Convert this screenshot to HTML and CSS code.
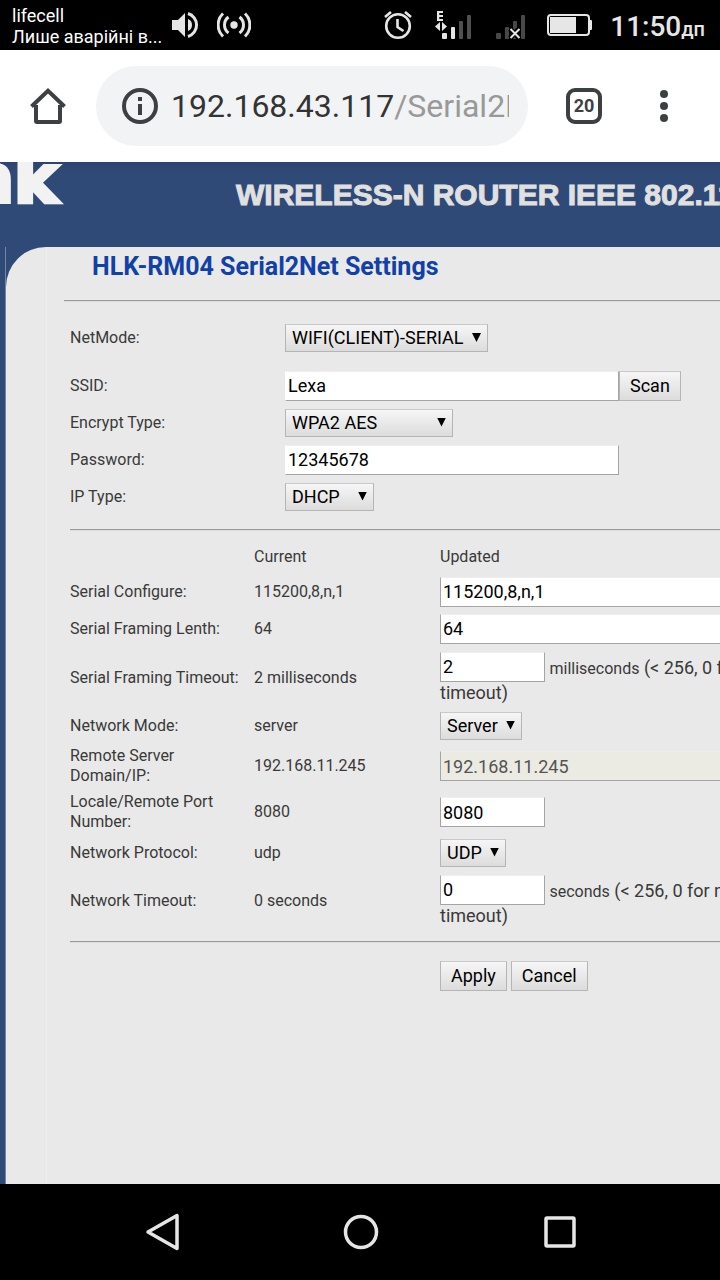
FILE: index.html
```html
<!DOCTYPE html>
<html lang="en">
<head>
<meta charset="utf-8">
<meta name="viewport" content="width=device-width, initial-scale=1">
<title>HLK-RM04 Serial2Net Settings</title>
<link rel="stylesheet" href="styles.css">
</head>
<body>
<header class="status">
  <div class="carrier" lang="uk"><span>lifecell</span><span>Лише аварійні в...</span></div>
  <svg class="volume" width="28" height="28" viewBox="0 0 28 28" fill="#e6e6e6"><path d="M1 9h6l7-7v24l-7-7H1z"/><path d="M17 8a6.500 6.500 0 0 1 0 12z"/><path d="M17 2.500a12 12 0 0 1 0 23" fill="none" stroke="#e6e6e6" stroke-width="3"/></svg>
  <svg width="34" height="28" viewBox="0 0 34 28" fill="none" stroke="#e6e6e6" stroke-width="3"><circle cx="17" cy="14" r="3.700" fill="#e6e6e6" stroke="none"/><path d="M11.500 6a10 10 0 0 0 0 16M22.500 6a10 10 0 0 1 0 16M6 2.500a16 16 0 0 0 0 23M28 2.500a16 16 0 0 1 0 23"/></svg>
  <div class="tray">
    <svg width="34" height="32" viewBox="0 0 34 32" fill="none" stroke="#e6e6e6" stroke-width="2.600"><circle cx="15" cy="17" r="11.800"/><path d="M14.500 10v8l6 4M2 8l6-5M28 8l-6-5"/></svg>
    <svg width="42" height="32" viewBox="0 0 42 32"><path d="M2 2h6v2H4.300v2H8v2H4.300v2H8v2H2z" fill="#e6e6e6"/><path d="M5 13v9L0 17.500zM7 13v9l5-4.500z" fill="#e6e6e6"/><rect x="7" y="24" width="5" height="6" rx="1" fill="#e6e6e6"/><rect x="16" y="18" width="4" height="12" rx="1" fill="#e6e6e6"/><rect x="24" y="12" width="4" height="18" rx="1" fill="#505050"/><rect x="32" y="6" width="4" height="24" rx="1" fill="#505050"/></svg>
    <svg width="32" height="32" viewBox="0 0 32 32"><g fill="#484848"><rect x="1" y="24" width="5" height="6" rx="1"/><rect x="10" y="18" width="4" height="12" rx="1"/><rect x="18" y="12" width="4" height="18" rx="1"/><rect x="26" y="6" width="4" height="24" rx="1"/></g><path d="M15 20l9 9M24 20l-9 9" stroke="#000" stroke-width="5"/><path d="M15.500 20l9 9M24.500 20l-9 9" stroke="#e6e6e6" stroke-width="2"/></svg>
    <svg width="47" height="24" viewBox="0 0 47 24"><rect x="3" y="2" width="41" height="20" rx="3" fill="none" stroke="#e6e6e6" stroke-width="2"/><rect x="5" y="4" width="26" height="16" fill="#e6e6e6"/><path d="M44 7h2q1 0 1 1v8q0 1-1 1h-2z" fill="#e6e6e6"/></svg>
    <div class="clock" lang="uk">11:50<small>дп</small></div>
  </div>
</header>

<div class="toolbar">
  <button class="icon" aria-label="Home"><svg width="36" height="36" viewBox="0 0 36 36" fill="none" stroke="#3c4043" stroke-width="4"><path d="M6 17v16q0 1 1 1h22q1 0 1-1V17"/><path d="M1.500 18.500L18 2.800l16.500 15.700"/></svg></button>
  <div class="omnibox">
    <svg width="36" height="36" viewBox="0 0 36 36"><circle cx="18" cy="18" r="16" fill="none" stroke="#3c4043" stroke-width="4"/><path d="M16 9h4v4h-4zM16 16h4v11h-4z" fill="#3c4043"/></svg>
    <div class="url">192.168.43.117<span>/Serial2Net</span></div>
  </div>
  <button class="icon tabs" aria-label="Tabs">20</button>
  <button class="icon menu" aria-label="Menu"><svg width="8" height="32" viewBox="0 0 8 32" fill="#3c4043"><circle cx="4" cy="4" r="4"/><circle cx="4" cy="16" r="4"/><circle cx="4" cy="28" r="4"/></svg></button>
</div>

<main class="page">
  <div class="banner">
    <div class="logo">Hi-Link</div>
    <div class="slogan">WIRELESS-N ROUTER IEEE 802.11N</div>
  </div>
  <div class="sheet-frame">
    <form class="sheet">
      <h1>HLK-RM04 Serial2Net Settings</h1>
      <hr>
      <div class="settings">
        <div class="row row-mode"><label for="netmode">NetMode:</label><span class="pick"><select id="netmode" class="w-mode"><option>WIFI(CLIENT)-SERIAL</option></select></span></div>
        <div class="row"><label for="ssid">SSID:</label><input id="ssid" class="wide" type="text" value="Lexa"><button type="button" class="btn">Scan</button></div>
        <div class="row"><label for="enc">Encrypt Type:</label><span class="pick"><select id="enc" class="w-enc"><option>WPA2 AES</option></select></span></div>
        <div class="row"><label for="pass">Password:</label><input id="pass" class="wide" type="text" value="12345678"></div>
        <div class="row"><label for="ip">IP Type:</label><span class="pick"><select id="ip" class="w-ip"><option>DHCP</option></select></span></div>
        <hr>
        <table class="serial">
          <colgroup><col class="c-name"><col class="c-current"><col></colgroup>
          <thead><tr><td></td><th>Current</th><th>Updated</th></tr></thead>
          <tbody>
            <tr class="r-input"><th><label for="conf">Serial Configure:</label></th><td>115200,8,n,1</td><td><input id="conf" class="wide" type="text" value="115200,8,n,1"></td></tr>
            <tr class="r-input"><th><label for="len">Serial Framing Lenth:</label></th><td>64</td><td><input id="len" class="wide" type="text" value="64"></td></tr>
            <tr class="r-note"><th><label for="ftime">Serial Framing Timeout:</label></th><td>2 milliseconds</td><td class="note"><input id="ftime" class="short" type="text" value="2"> <small>milliseconds</small> (&lt; 256, 0 for no<br>timeout)</td></tr>
            <tr class="r-select"><th><label for="mode">Network Mode:</label></th><td>server</td><td><span class="pick"><select id="mode" class="w-server"><option>Server</option></select></span></td></tr>
            <tr class="r-double"><th><label for="remote">Remote Server<br>Domain/IP:</label></th><td>192.168.11.245</td><td><input id="remote" class="wide" type="text" value="192.168.11.245" disabled></td></tr>
            <tr class="r-double"><th><label for="port">Locale/Remote Port Number:</label></th><td>8080</td><td><input id="port" class="short" type="text" value="8080"></td></tr>
            <tr class="r-select"><th><label for="proto">Network Protocol:</label></th><td>udp</td><td><span class="pick"><select id="proto" class="w-udp"><option>UDP</option></select></span></td></tr>
            <tr class="r-note"><th><label for="ntime">Network Timeout:</label></th><td>0 seconds</td><td class="note"><input id="ntime" class="short" type="text" value="0"> <small>seconds</small> (&lt; 256, 0 for no<br>timeout)</td></tr>
          </tbody>
        </table>
        <hr>
        <div class="actions"><button type="button" class="btn">Apply</button><button type="button" class="btn">Cancel</button></div>
      </div>
    </form>
  </div>
</main>

<nav class="navbar">
  <button aria-label="Back"><svg width="40" height="40" viewBox="0 0 40 40"><path d="M37 3.500v33L8 20z" fill="none" stroke="#e6e6e6" stroke-width="3.500" stroke-linejoin="round"/></svg></button>
  <button aria-label="Home"><svg width="40" height="40" viewBox="0 0 40 40"><circle cx="21" cy="20" r="15.500" fill="none" stroke="#e6e6e6" stroke-width="3.500"/></svg></button>
  <button aria-label="Recent apps"><svg width="40" height="40" viewBox="0 0 40 40"><rect x="6" y="6" width="28" height="28" rx="1" fill="none" stroke="#e6e6e6" stroke-width="3.500"/></svg></button>
</nav>
</body>
</html>
```
FILE: styles.css
```css
* { box-sizing: border-box; }
body {
  margin: 0;
  min-height: 100vh;
  display: flex;
  flex-direction: column;
  overflow-x: hidden;
  font-family: Roboto, "Noto Sans", sans-serif;
  background: #000;
}
svg { display: block; flex: none; }
button, input, select { font: inherit; margin: 0; }

/* Status bar */
.status {
  height: 50px;
  padding: 0 15px 0 12px;
  display: flex;
  align-items: center;
  gap: 18px;
  color: #e6e6e6;
  background: #000;
}
.carrier {
  display: flex;
  flex-direction: column;
  font-size: 18px;
  line-height: 21px;
  white-space: nowrap;
  color: #fff;
  padding-top: 2px;
}
.volume { margin-left: -9px; }
.tray { margin-left: auto; display: flex; align-items: center; gap: 18px; }
.clock { font-size: 28px; font-weight: 500; white-space: nowrap; padding-top: 2px; }
.clock small { font-size: 20px; }

/* Browser toolbar */
.toolbar {
  height: 112px;
  padding: 0 52px 0 30px;
  display: flex;
  align-items: center;
  background: #fff;
}
.icon { padding: 0; border: 0; background: none; }
.omnibox {
  flex: 1;
  min-width: 0;
  height: 80px;
  margin: 0 38px 0 30px;
  padding: 0 19px 0 26px;
  display: flex;
  align-items: center;
  gap: 13px;
  border-radius: 40px;
  background: #f1f3f4;
}
.url {
  flex: 1;
  min-width: 0;
  overflow: hidden;
  white-space: nowrap;
  font-size: 32px;
  line-height: 42px;
  color: #333;
}
.url span { color: #999; }
.icon.tabs {
  width: 36px;
  height: 36px;
  border: 4px solid #3c4043;
  border-radius: 9px;
  font-size: 18px;
  line-height: 28px;
  font-weight: 700;
  color: #3c4043;
}
.menu { margin-left: 58px; }

/* Router page */
.page {
  flex: 1;
  display: flex;
  flex-direction: column;
  overflow: hidden;
  background: #304a78;
}
.banner {
  height: 85px;
  display: flex;
  align-items: flex-start;
  overflow: hidden;
  font-weight: 700;
  white-space: nowrap;
  background: linear-gradient(#2d446e, #304a78 12px);
}
.logo {
  width: 58px;
  margin-top: -16px;
  display: flex;
  justify-content: flex-end;
  flex: none;
  font-family: "DejaVu Sans", sans-serif;
  font-size: 66px;
  line-height: 68px;
  color: #f2f2f2;
  -webkit-text-stroke: 4px #f2f2f2;
}
.slogan {
  margin: 16px 0 0 178px;
  font-family: "Liberation Sans", Arial, sans-serif;
  font-size: 30px;
  line-height: 34px;
  color: #e0e0e0;
  -webkit-text-stroke: 1px #e0e0e0;
}
.sheet-frame {
  flex: 1;
  display: flex;
  margin-left: 5px;
  border-left: 1px solid #7586a6;
}
.sheet {
  flex: 1;
  min-width: 0;
  padding-left: 58px;
  border-top-left-radius: 40px;
  background: linear-gradient(90deg, #e9e9e9 40px, #eee 40px, #eee 41px, #e9e9e9 41px);
  color: #393939;
  font-size: 16px;
  line-height: 20px;
}
h1 {
  margin: 0 0 13px 28px;
  font-size: 25px;
  line-height: 40px;
  font-weight: 700;
  color: #1141a8;
}
hr {
  margin: 0;
  height: 2px;
  border: 0;
  border-top: 1px solid #999;
  border-bottom: 1px solid #ddd;
}
.settings { padding: 7px 0 0 6px; }
.row { height: 37px; display: flex; align-items: center; }
.row-mode { height: 58px; }
.row > label { width: 215px; flex: none; }
.settings > .row + hr { margin-top: 14px; }

input {
  height: 30px;
  padding: 0 2px;
  border: 1px solid #a4a4a4;
  border-top-color: #eee;
  border-radius: 0;
  background: #fff;
  color: #000;
  font-size: 18px;
}
input:disabled { background: #ebebe4; color: #545454; }
.row input { border-left-color: #fff; }
.wide { width: 334px; }
.short { width: 105px; }

.pick { position: relative; display: inline-block; vertical-align: middle; }
.pick::after {
  content: "";
  position: absolute;
  right: 7px;
  top: 9px;
  width: 9px;
  height: 9px;
  background: #000;
  clip-path: polygon(0 0, 100% 0, 50% 100%);
  pointer-events: none;
}
select, .btn {
  border: 1px solid #b5b5b5;
  border-top-color: #c9c9c9;
  border-radius: 0;
  background: linear-gradient(#f6f6f6, #dcdcdc);
  color: #000;
  font-size: 18px;
}
select {
  display: block;
  appearance: none;
  height: 28px;
  padding: 0 6px;
}
.w-mode { width: 203px; }
.w-enc { width: 168px; }
.w-ip { width: 89px; }
.w-server { width: 82px; }
.w-udp { width: 66px; }
.btn { height: 30px; padding: 0 10px; }

.serial {
  width: 100%;
  margin-top: 10px;
  table-layout: fixed;
  border-collapse: collapse;
}
.c-name { width: 184px; }
.c-current { width: 186px; }
.serial th, .serial td {
  padding: 0;
  text-align: left;
  font-weight: 400;
  vertical-align: middle;
  white-space: nowrap;
}
.serial tbody th { white-space: normal; }
.serial input { display: block; }
.serial thead tr { height: 32px; }
.r-input { height: 37px; }
.r-note { height: 61px; }
.r-select { height: 35px; }
.r-double { height: 46px; }
.serial .note { font-size: 18px; line-height: 22px; }
.serial .note input { display: inline-block; vertical-align: baseline; }
.note small { font-size: 16px; }
.serial + hr { margin-top: 10px; }
.actions { display: flex; gap: 4px; padding: 18px 0 20px 370px; }

/* System navigation */
.navbar {
  height: 96px;
  padding: 0 60px;
  display: flex;
  background: #000;
}
.navbar button {
  flex: 1;
  padding: 0;
  border: 0;
  display: flex;
  align-items: center;
  justify-content: center;
  background: none;
}
```
